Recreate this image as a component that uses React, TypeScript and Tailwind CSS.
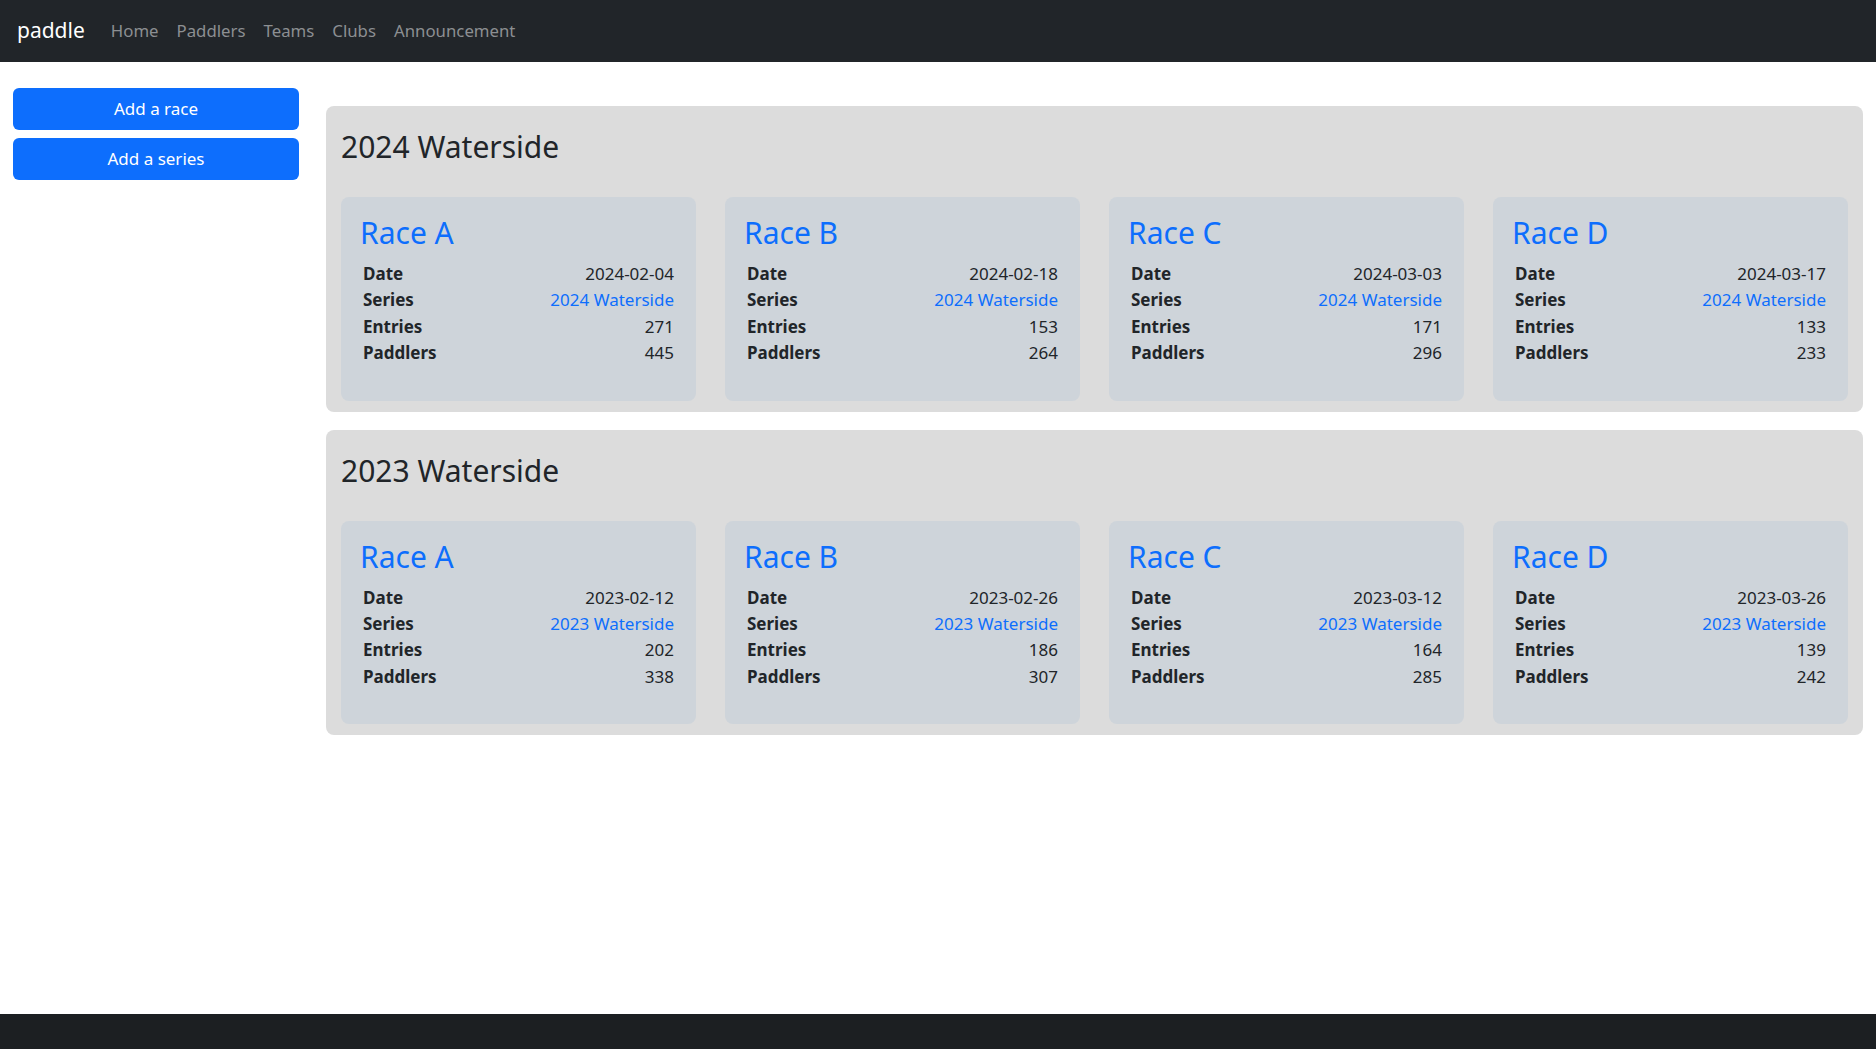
import React from "react";

type Race = { name: string; date: string; series: string; entries: number; paddlers: number };

const seriesData: { title: string; races: Race[] }[] = [
  {
    title: "2024 Waterside",
    races: [
      { name: "Race A", date: "2024-02-04", series: "2024 Waterside", entries: 271, paddlers: 445 },
      { name: "Race B", date: "2024-02-18", series: "2024 Waterside", entries: 153, paddlers: 264 },
      { name: "Race C", date: "2024-03-03", series: "2024 Waterside", entries: 171, paddlers: 296 },
      { name: "Race D", date: "2024-03-17", series: "2024 Waterside", entries: 133, paddlers: 233 },
    ],
  },
  {
    title: "2023 Waterside",
    races: [
      { name: "Race A", date: "2023-02-12", series: "2023 Waterside", entries: 202, paddlers: 338 },
      { name: "Race B", date: "2023-02-26", series: "2023 Waterside", entries: 186, paddlers: 307 },
      { name: "Race C", date: "2023-03-12", series: "2023 Waterside", entries: 164, paddlers: 285 },
      { name: "Race D", date: "2023-03-26", series: "2023 Waterside", entries: 139, paddlers: 242 },
    ],
  },
];

function Row({ label, children }: { label: string; children: React.ReactNode }) {
  return (
    <div className="flex justify-between leading-[26.4px]">
      <span className="font-bold">{label}</span>
      <span>{children}</span>
    </div>
  );
}

function RaceCard({ race }: { race: Race }) {
  return (
    <div className="bg-[#ced4da] rounded-[8px] pt-[17px] pb-[34px] px-[19px]">
      <a className="block text-[#0d6efd] text-[30px] leading-[38px] mb-[9px]">{race.name}</a>
      <div className="px-[3px] text-[17px] text-[#212529]">
        <Row label="Date">{race.date}</Row>
        <Row label="Series">
          <a className="text-[#0d6efd]">{race.series}</a>
        </Row>
        <Row label="Entries">{race.entries}</Row>
        <Row label="Paddlers">{race.paddlers}</Row>
      </div>
    </div>
  );
}

export default function App() {
  return (
    <div
      className="min-h-screen flex flex-col bg-white text-[#212529]"
      style={{ fontFamily: '"Noto Sans", "Open Sans", sans-serif' }}
    >
      <nav className="h-[62px] bg-[#212529] flex items-center px-[17px] shrink-0">
        <span className="text-white text-[21px] mr-[17px]">paddle</span>
        {["Home", "Paddlers", "Teams", "Clubs", "Announcement"].map((l) => (
          <span key={l} className="px-[9px] text-[16.8px] text-[#8c8f92]">
            {l}
          </span>
        ))}
      </nav>
      <div className="flex flex-1">
        <div className="w-[286px] ml-[13px] mt-[26px] flex flex-col gap-[8px] shrink-0">
          <button className="h-[42px] rounded-[6px] bg-[#0d6efd] text-white text-[17px]">Add a race</button>
          <button className="h-[42px] rounded-[6px] bg-[#0d6efd] text-white text-[17px]">Add a series</button>
        </div>
        <div className="flex-1 ml-[27px] mr-[13px] mt-[44px] flex flex-col gap-[18px]">
          {seriesData.map((s) => (
            <section key={s.title} className="bg-[#dcdcdc] rounded-[8px] pt-[22px] pb-[11px] px-[15px]">
              <h2 className="text-[30px] leading-[38px] mb-[31px]">{s.title}</h2>
              <div className="grid grid-cols-4 gap-[29px]">
                {s.races.map((r) => (
                  <RaceCard key={r.name} race={r} />
                ))}
              </div>
            </section>
          ))}
        </div>
      </div>
      <footer className="h-[35px] bg-[#1c1f22] shrink-0" />
    </div>
  );
}
